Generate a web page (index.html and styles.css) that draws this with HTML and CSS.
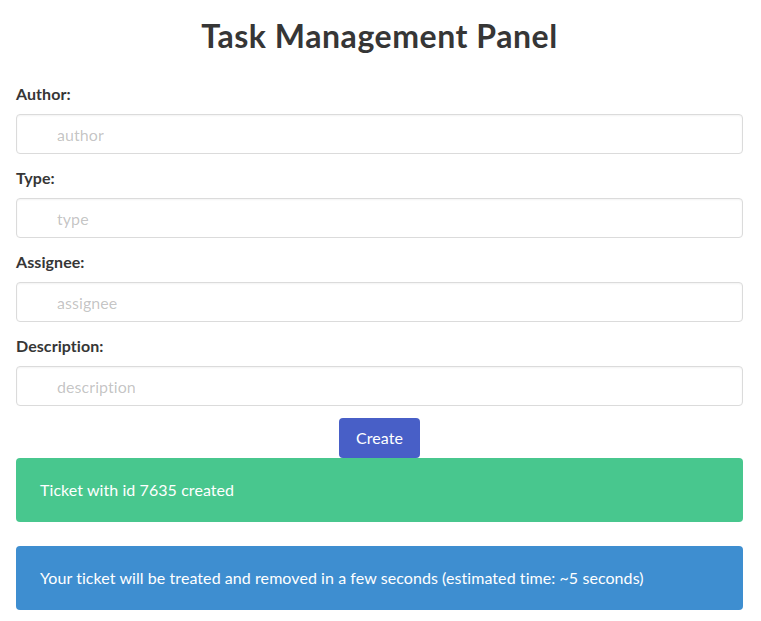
FILE: index.html
```html
<!DOCTYPE html>
<html lang="en">
<head>
<meta charset="utf-8">
<title>Task Management Panel</title>
<link rel="stylesheet" href="styles.css">
</head>
<body>
<div class="container">
  <h1 class="title">Task Management Panel</h1>
  <div class="field">
    <label class="label">Author:</label>
    <input class="input" type="text" placeholder="author">
  </div>
  <div class="field">
    <label class="label">Type:</label>
    <input class="input" type="text" placeholder="type">
  </div>
  <div class="field">
    <label class="label">Assignee:</label>
    <input class="input" type="text" placeholder="assignee">
  </div>
  <div class="field">
    <label class="label">Description:</label>
    <input class="input" type="text" placeholder="description">
  </div>
  <div class="actions">
    <button class="button" type="button">Create</button>
  </div>
  <div class="notification success">Ticket with id 7635 created</div>
  <div class="notification info">Your ticket will be treated and removed in a few seconds (estimated time: ~5 seconds)</div>
</div>
</body>
</html>
```
FILE: styles.css
```css
* { box-sizing: border-box; }
html, body { margin: 0; padding: 0; background: #fff; }
body {
  font-family: Lato, "Open Sans", sans-serif;
  font-size: 16px;
  line-height: 1.5;
  color: #4a4a4a;
  letter-spacing: 0.07px;
}
.container { padding: 18px 18px 16px 16px; }
.title {
  margin: 0 0 28px;
  text-align: center;
  font-size: 32px;
  font-weight: 700;
  line-height: 1.125;
  letter-spacing: 0.55px;
  color: #363636;
}
.field { margin-bottom: 12px; }
.label {
  display: block;
  font-weight: 700;
  color: #363636;
  margin-bottom: 8px;
}
.input {
  display: block;
  width: 100%;
  height: 40px;
  border: 1px solid #dbdbdb;
  border-radius: 4px;
  box-shadow: inset 0 1px 2px rgba(10,10,10,0.05);
  padding: 7px 11px 7px 40px;
  font-family: inherit;
  font-size: 16px;
  letter-spacing: inherit;
  color: #363636;
  background: #fff;
}
.input::placeholder { color: rgba(54,54,54,0.3); }
.actions { display: flex; justify-content: center; }
.button {
  height: 40px;
  padding: 7px 16px;
  border: 1px solid transparent;
  border-radius: 4px;
  background: #485fc7;
  color: #fff;
  font-family: inherit;
  font-size: 16px;
  letter-spacing: inherit;
  line-height: 1.5;
  cursor: pointer;
}
.notification {
  border-radius: 4px;
  padding: 20px 40px 20px 24px;
  margin-bottom: 24px;
  color: #fff;
}
.success { background: #48c78e; }
.info { background: #3e8ed0; }
```
